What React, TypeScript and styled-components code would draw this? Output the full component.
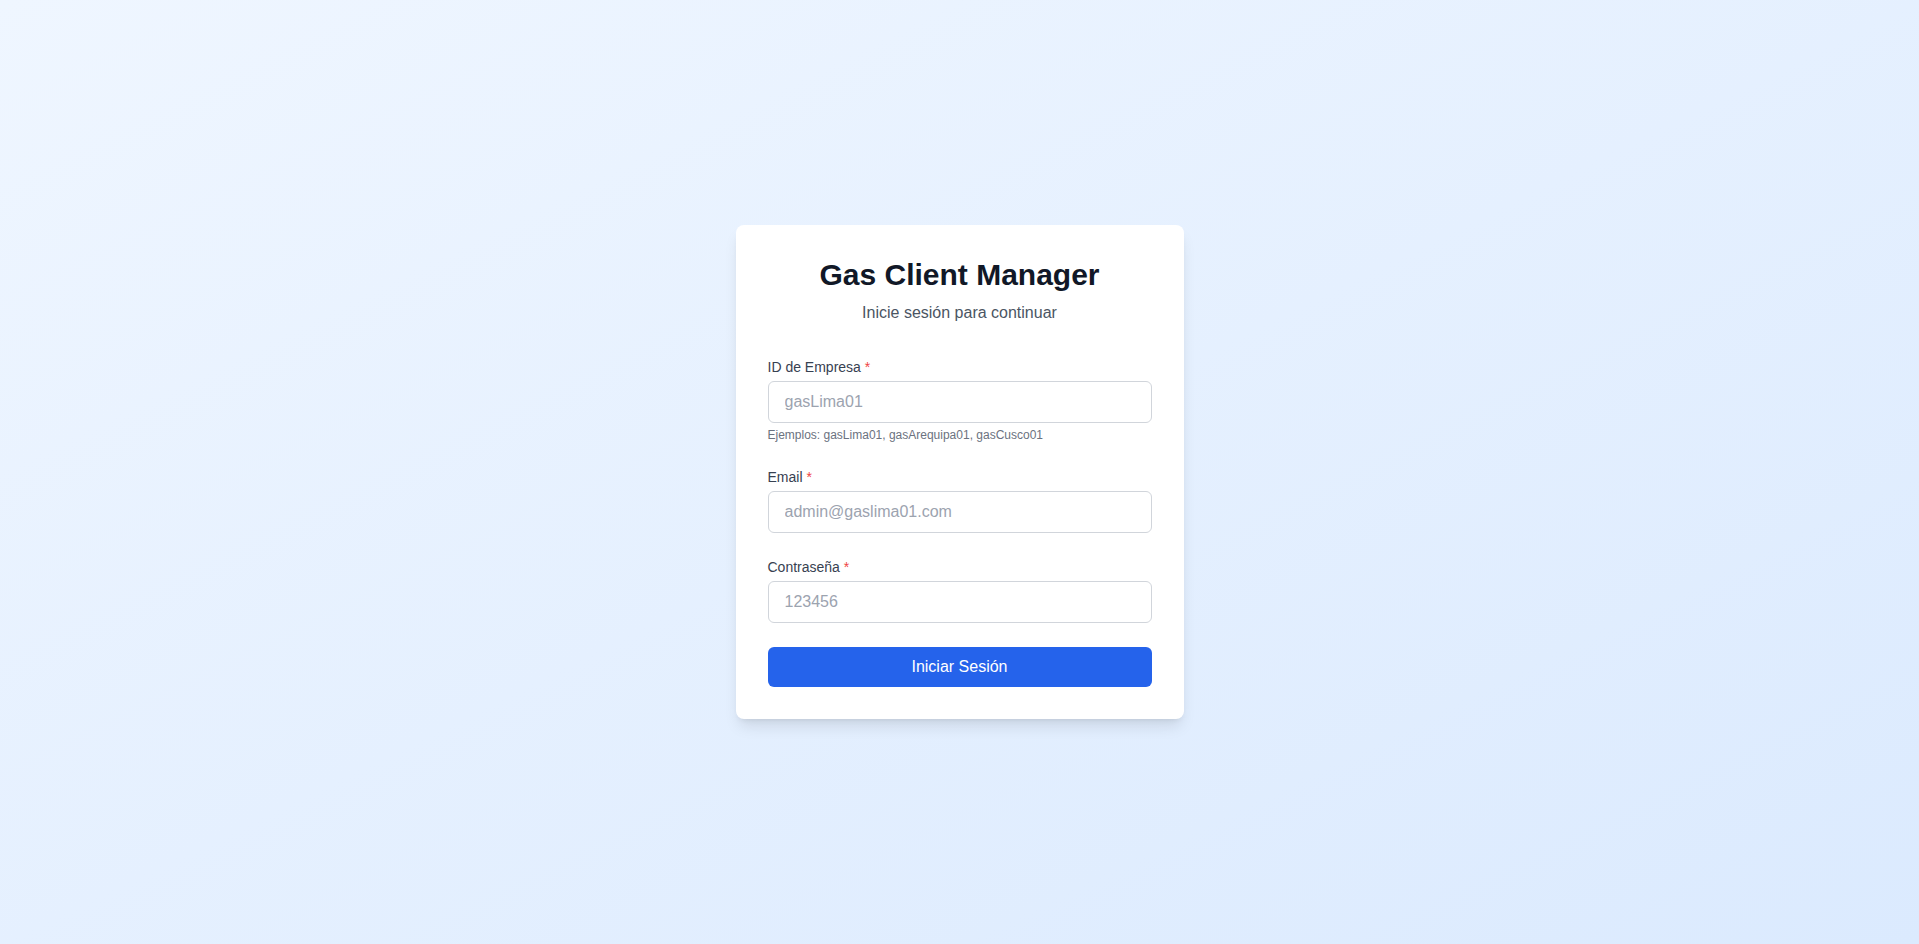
import React, { useState } from "react";
import styled, { createGlobalStyle } from "styled-components";

const GlobalStyle = createGlobalStyle`
	*, *::before, *::after {
		box-sizing: border-box;
	}
	html, body {
		margin: 0;
		padding: 0;
	}
	body {
		font-family: "Liberation Sans", Arial, sans-serif;
	}
`;

type Field = {
	id: string;
	label: string;
	type: string;
	placeholder: string;
	hint?: string;
};

const fields: Field[] = [
	{
		id: "companyId",
		label: "ID de Empresa",
		type: "text",
		placeholder: "gasLima01",
		hint: "Ejemplos: gasLima01, gasArequipa01, gasCusco01",
	},
	{
		id: "email",
		label: "Email",
		type: "email",
		placeholder: "admin@gaslima01.com",
	},
	{
		id: "password",
		label: "Contraseña",
		type: "password",
		placeholder: "123456",
	},
];

export default function App() {
	const [values, setValues] = useState<Record<string, string>>({
		companyId: "",
		email: "",
		password: "",
	});

	return (
		<>
			<GlobalStyle />
			<Page>
				<Card>
					<Header>
						<Title>Gas Client Manager</Title>
						<Subtitle>Inicie sesión para continuar</Subtitle>
					</Header>
					<Form onSubmit={(e) => e.preventDefault()}>
						{fields.map((f) => (
							<Group key={f.id}>
								<Label htmlFor={f.id}>
									{f.label} <Required>*</Required>
								</Label>
								<Input
									id={f.id}
									type={f.type === "password" ? "text" : f.type}
									placeholder={f.placeholder}
									value={values[f.id]}
									onChange={(e) =>
										setValues((prev) => ({ ...prev, [f.id]: e.target.value }))
									}
								/>
								{f.hint && <Hint>{f.hint}</Hint>}
							</Group>
						))}
						<SubmitButton type="submit">Iniciar Sesión</SubmitButton>
					</Form>
				</Card>
			</Page>
		</>
	);
}

const Page = styled.div`
	min-height: 100vh;
	display: flex;
	align-items: center;
	justify-content: center;
	background: linear-gradient(to bottom right, #eff6ff, #dbeafe);
`;
const Card = styled.div`
	width: 448px;
	background: #fff;
	border-radius: 8px;
	padding: 32px;
	box-shadow: 0 10px 15px -3px rgba(0, 0, 0, 0.1),
		0 4px 6px -4px rgba(0, 0, 0, 0.1);
`;
const Header = styled.div`
	text-align: center;
	margin-bottom: 32px;
`;
const Title = styled.h1`
	margin: 0;
	font-size: 30px;
	line-height: 36px;
	font-weight: 700;
	color: #111827;
`;
const Subtitle = styled.p`
	margin: 8px 0 0;
	font-size: 16px;
	line-height: 24px;
	color: #4b5563;
`;
const Form = styled.form`
	display: flex;
	flex-direction: column;
	gap: 24px;
`;
const Group = styled.div`
	display: flex;
	flex-direction: column;
`;
const Label = styled.label`
	display: block;
	font-size: 14px;
	line-height: 20px;
	font-weight: 500;
	color: #374151;
	margin-bottom: 4px;
`;
const Required = styled.span`
	color: #ef4444;
`;
const Input = styled.input`
	width: 100%;
	height: 42px;
	padding: 8px 16px;
	font-family: inherit;
	font-size: 16px;
	line-height: 24px;
	color: #111827;
	background: #fff;
	border: 1px solid #d1d5db;
	border-radius: 6px;
	outline: none;
	&::placeholder {
		color: #9ca3af;
	}
	&:focus {
		border-color: #3b82f6;
		box-shadow: 0 0 0 2px rgba(59, 130, 246, 0.4);
	}
`;
const Hint = styled.p`
	margin: 4px 0 0;
	font-size: 12px;
	line-height: 16px;
	color: #6b7280;
`;
const SubmitButton = styled.button`
	width: 100%;
	height: 40px;
	padding: 8px 16px;
	font-family: inherit;
	font-size: 16px;
	line-height: 24px;
	color: #fff;
	background: #2563eb;
	border: none;
	border-radius: 6px;
	cursor: pointer;
	&:hover {
		background: #1d4ed8;
	}
`;
